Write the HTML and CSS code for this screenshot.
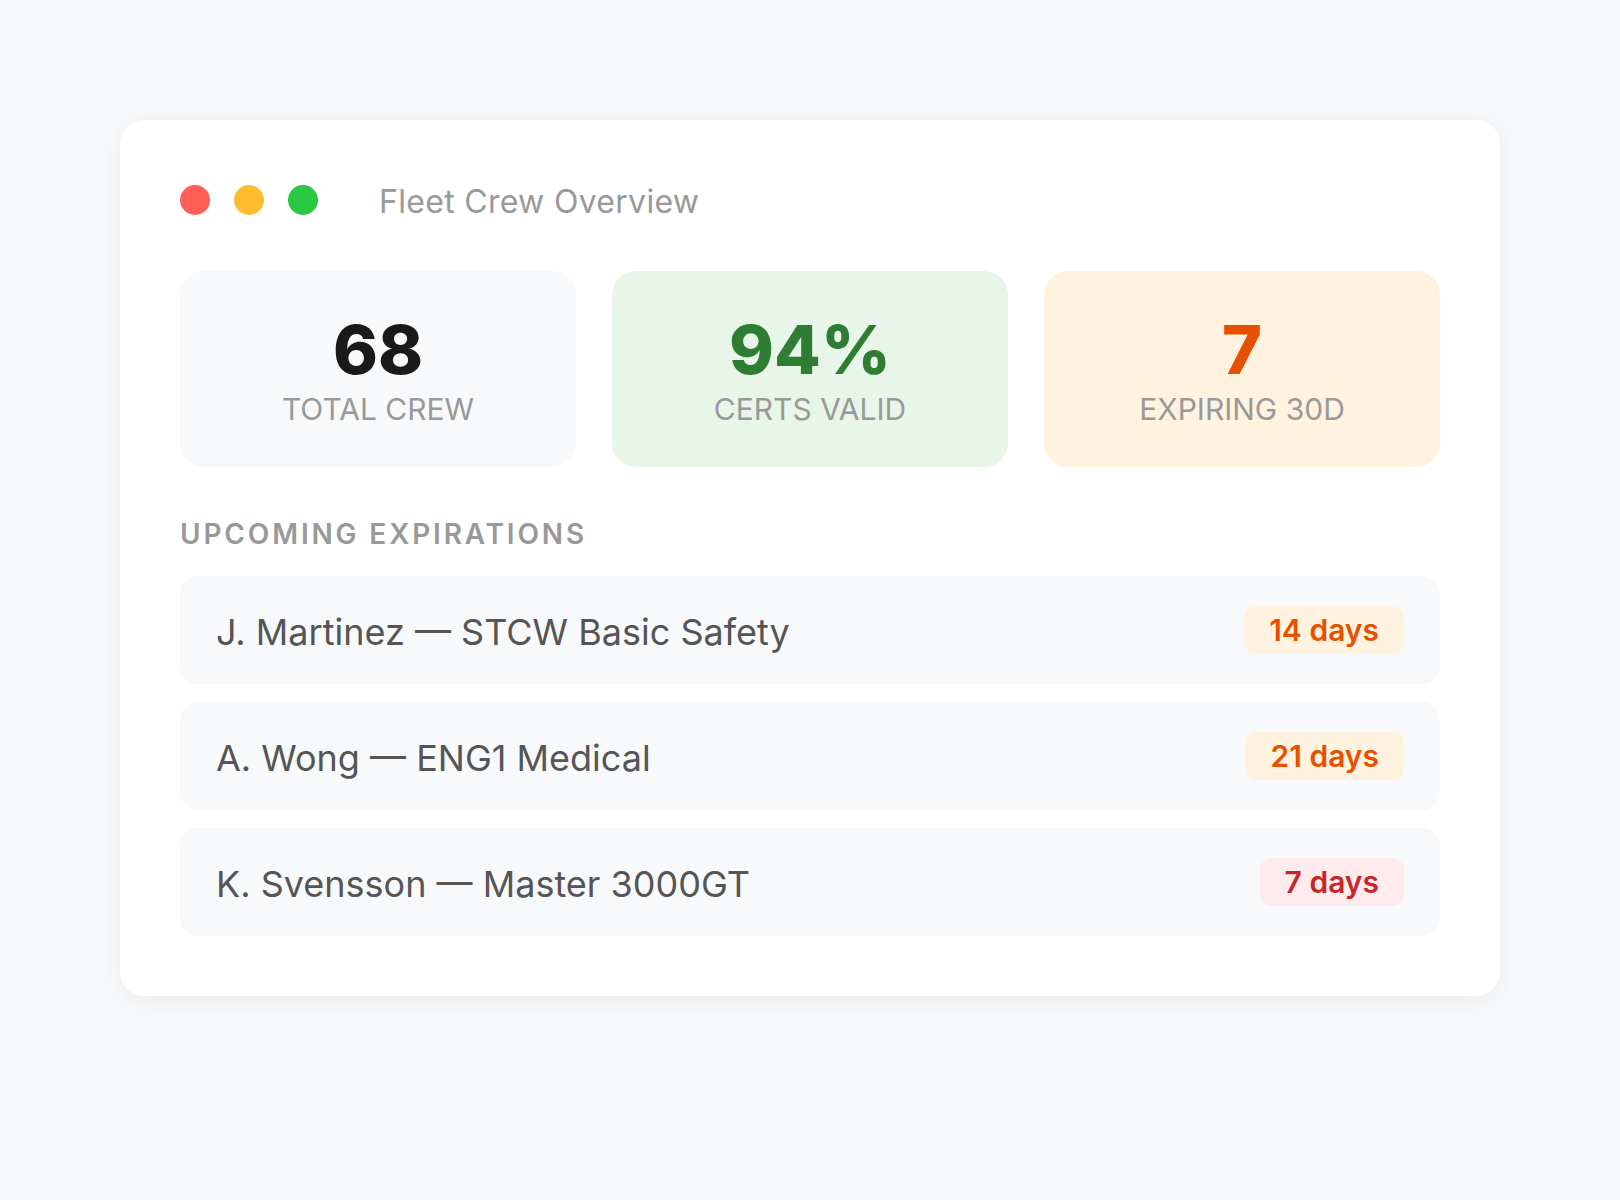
FILE: index.html
```html
<!DOCTYPE html>
<html lang="en">
<head>
<meta charset="utf-8">
<title>Fleet Crew Overview</title>
<link rel="stylesheet" href="styles.css">
</head>
<body>
<main class="window">
  <header class="titlebar">
    <div class="dots">
      <span class="dot dot-red"></span>
      <span class="dot dot-yellow"></span>
      <span class="dot dot-green"></span>
    </div>
    <h1 class="title">Fleet Crew Overview</h1>
  </header>

  <section class="stats">
    <div class="stat stat-neutral">
      <div class="stat-value">68</div>
      <div class="stat-label">TOTAL CREW</div>
    </div>
    <div class="stat stat-good">
      <div class="stat-value">94%</div>
      <div class="stat-label">CERTS VALID</div>
    </div>
    <div class="stat stat-warn">
      <div class="stat-value">7</div>
      <div class="stat-label">EXPIRING 30D</div>
    </div>
  </section>

  <h2 class="section-title">UPCOMING EXPIRATIONS</h2>

  <ul class="list">
    <li class="row">
      <span class="row-text">J. Martinez — STCW Basic Safety</span>
      <span class="badge badge-warn">14 days</span>
    </li>
    <li class="row">
      <span class="row-text">A. Wong — ENG1 Medical</span>
      <span class="badge badge-warn">21 days</span>
    </li>
    <li class="row">
      <span class="row-text">K. Svensson — Master 3000GT</span>
      <span class="badge badge-danger">7 days</span>
    </li>
  </ul>
</main>
</body>
</html>
```

FILE: styles.css
```css
* { box-sizing: border-box; }

html, body {
  margin: 0;
  padding: 0;
}

body {
  background: #f8f9fa;
  font-family: Inter, "Noto Sans", "Liberation Sans", sans-serif;
  padding: 120px;
}

.window {
  background: #ffffff;
  border-radius: 24px;
  box-shadow: 0 4px 24px rgba(0, 0, 0, 0.06);
  padding: 60px;
}

.titlebar {
  display: flex;
  align-items: center;
  height: 40px;
  margin-bottom: 51px;
}

.dots {
  display: flex;
  gap: 24px;
}

.dot {
  width: 30px;
  height: 30px;
  border-radius: 50%;
}

.dot-red { background: #ff5f57; }
.dot-yellow { background: #febc2e; }
.dot-green { background: #28c840; }

.title {
  margin: 0 0 0 61px;
  padding-top: 2px;
  font-size: 32px;
  font-weight: 400;
  color: #999999;
  letter-spacing: 0.3px;
}

.stats {
  display: grid;
  grid-template-columns: repeat(3, 1fr);
  gap: 36px;
  margin-bottom: 50px;
}

.stat {
  height: 196px;
  border-radius: 24px;
  display: flex;
  flex-direction: column;
  align-items: center;
  justify-content: center;
  gap: 8px;
  padding-top: 4px;
}

.stat-neutral { background: #f8f9fa; }
.stat-good { background: #e8f5e9; }
.stat-warn { background: #fff3e0; }

.stat-value {
  font-size: 68px;
  font-weight: 800;
  line-height: 1;
}

.stat-neutral .stat-value { color: #1a1a1a; }
.stat-good .stat-value { color: #2e7d32; }
.stat-warn .stat-value { color: #e65100; }

.stat-label {
  font-size: 30px;
  line-height: 36px;
  color: #999999;
}

.section-title {
  margin: 0 0 25px;
  font-size: 28px;
  font-weight: 600;
  color: #999999;
  letter-spacing: 2.85px;
  line-height: 34px;
}

.list {
  list-style: none;
  margin: 0;
  padding: 0;
  display: flex;
  flex-direction: column;
  gap: 18px;
}

.row {
  height: 108px;
  background: #f8f9fa;
  border-radius: 18px;
  padding: 0 36px;
  display: flex;
  align-items: center;
  justify-content: space-between;
}

.row-text {
  font-size: 36px;
  color: #555555;
  padding-top: 4px;
}

.badge {
  font-size: 30px;
  font-weight: 600;
  padding: 6px 25px;
  border-radius: 12px;
  line-height: 36px;
}

.badge-warn { background: #fff3e0; color: #e65100; }
.badge-danger { background: #ffebee; color: #c62828; }
```
